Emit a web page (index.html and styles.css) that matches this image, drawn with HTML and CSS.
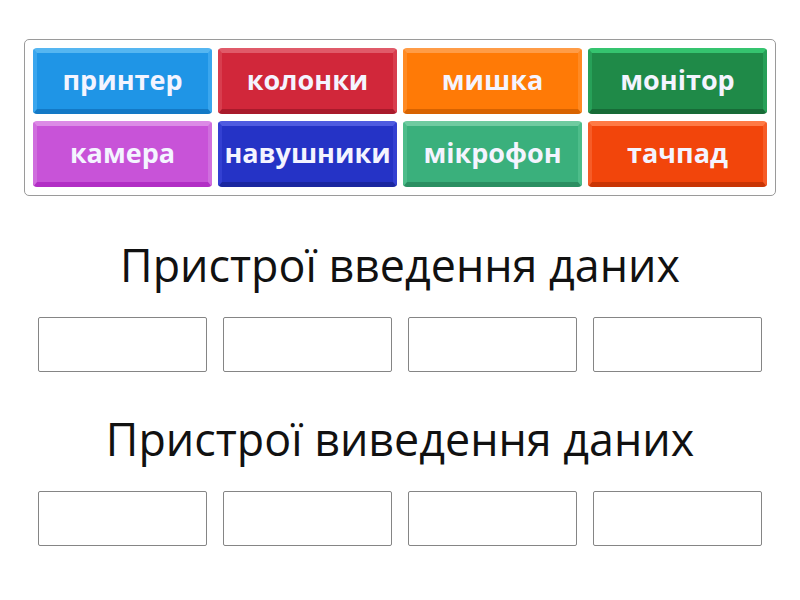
FILE: index.html
```html
<!DOCTYPE html>
<html lang="uk">
<head>
<meta charset="utf-8">
<link rel="stylesheet" href="styles.css">
</head>
<body>
<div class="page">
  <div class="bank">
    <div class="tile blue">принтер</div>
    <div class="tile red">колонки</div>
    <div class="tile orange">мишка</div>
    <div class="tile green">монітор</div>
    <div class="tile purple">камера</div>
    <div class="tile navy">навушники</div>
    <div class="tile teal">мікрофон</div>
    <div class="tile redorange">тачпад</div>
  </div>
  <h2 class="group-title first">Пристрої введення даних</h2>
  <div class="slots">
    <div class="slot"></div><div class="slot"></div><div class="slot"></div><div class="slot"></div>
  </div>
  <h2 class="group-title">Пристрої виведення даних</h2>
  <div class="slots">
    <div class="slot"></div><div class="slot"></div><div class="slot"></div><div class="slot"></div>
  </div>
</div>
</body>
</html>
```
FILE: styles.css
```css
html, body { margin: 0; padding: 0; background: #fff; }
body { font-family: "Open Sans", "Noto Sans", sans-serif; }
.page { width: 800px; height: 600px; padding-top: 39px; box-sizing: border-box; }
.bank {
  margin: 0 24px;
  border: 1px solid #9a9a9a;
  border-radius: 5px;
  padding: 8px;
  display: grid;
  grid-template-columns: repeat(4, 179px);
  grid-auto-rows: 66px;
  column-gap: 6px;
  row-gap: 7px;
}
.tile {
  box-sizing: border-box;
  border-radius: 4px;
  border-style: solid;
  border-width: 5px 4px 5px 4px;
  padding-bottom: 4px;
  display: flex;
  align-items: center;
  justify-content: center;
  color: #f4f4ff;
  font-weight: 700;
  font-size: 27px;
  white-space: nowrap;
  letter-spacing: 0;
}
.blue { background: #1f95e6; border-color: #55b6f1 #3aa6ee #1379c6 #3aa6ee; }
.red { background: #d1273a; border-color: #e05a69 #d83d4e #a91a2b #d83d4e; }
.orange { background: #ff7a06; border-color: #ff9c47 #ff8a23 #d86300 #ff8a23; }
.green { background: #1f8a48; border-color: #35c46f #27a058 #176b37 #27a058; }
.purple { background: #c853d8; border-color: #dc8ae6 #d06ede #b22ec5 #d06ede; }
.navy { background: #2533c6; border-color: #4f5be0 #3340d2 #1b27a0 #3340d2; }
.teal { background: #3ab07c; border-color: #6fcba0 #4dbd8a #2b8f62 #4dbd8a; }
.redorange { background: #f2450b; border-color: #ff7a45 #f65c27 #c93505 #f65c27; }
.group-title {
  margin: 0;
  text-align: center;
  font-weight: 400;
  font-size: 44.8px;
  color: #111;
  line-height: 60px;
}
.group-title.first { margin-top: 39px; }
.slots {
  display: flex;
  gap: 16px;
  padding-left: 38px;
  margin-top: 22px;
  margin-bottom: 37px;
}
.slot {
  width: 169px;
  height: 55px;
  box-sizing: border-box;
  border: 1px solid #858585;
  border-radius: 2px;
}
```
